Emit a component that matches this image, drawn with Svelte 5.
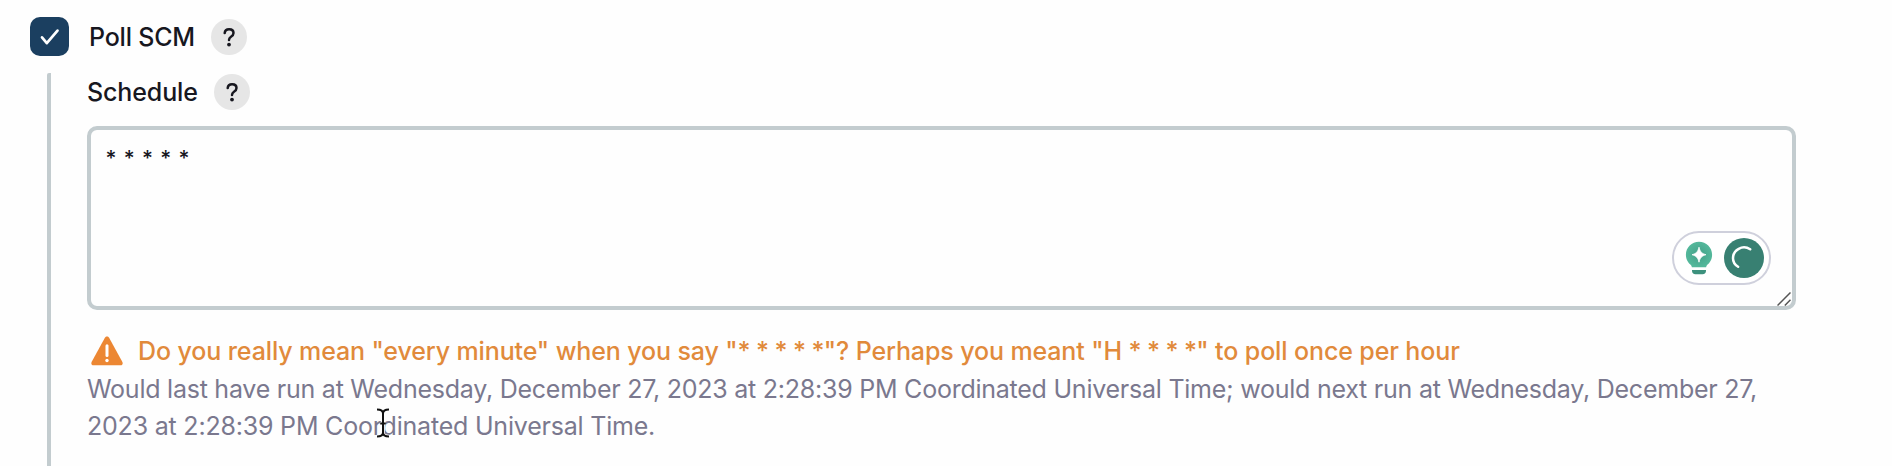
<script>
  let enabled = $state(true);
  let schedule = $state('* * * * *');
</script>

{#snippet help()}
  <button class="help" aria-label="Help">
    <svg viewBox="0 0 36 36" width="36" height="36" fill="none">
      <path d="M13.700 14.100c.2-2.500 1.900-3.900 4.400-3.900 2.600 0 4.400 1.500 4.400 3.800 0 1.800-1 2.800-2.500 3.700-1.400.9-2 1.600-2 3.200" stroke="#17171f" stroke-width="2.500" stroke-linecap="round" stroke-linejoin="round" />
      <circle cx="18" cy="25.600" r="1.900" fill="#17171f" />
    </svg>
  </button>
{/snippet}

<main>
  <div class="toggle">
    <label>
      <input type="checkbox" bind:checked={enabled} />
      <span class="box">
        {#if enabled}
          <svg viewBox="0 0 40 40" width="40" height="40" fill="none">
            <path d="M12 20.400l4.800 5.700L27.500 13.600" stroke="#fff" stroke-width="2.700" stroke-linecap="round" stroke-linejoin="round" />
          </svg>
        {/if}
      </span>
      <span class="name poll">Poll SCM</span>
    </label>
    {@render help()}
  </div>

  <section>
    <div class="heading">
      <span class="name sched">Schedule</span>
      {@render help()}
    </div>

    <div class="field">
      <textarea bind:value={schedule} spellcheck="false" aria-label="Schedule"></textarea>
      <div class="assistant">
        <svg class="bulb" viewBox="0 0 28 34" width="28" height="34">
          <defs>
            <radialGradient id="glow"><stop offset="0" stop-color="#43a088" /><stop offset="1" stop-color="#54b89b" /></radialGradient>
          </defs>
          <path d="M14 .8C6.700.8.9 6.500.9 13.700c0 5 2.500 8.300 5.200 10.500.4.8.6 1.300.8 2.100h14.200c.2-.8.4-1.300.8-2.100 2.700-2.200 5.200-5.500 5.200-10.500C27.100 6.500 21.300.8 14 .8z" fill="url(#glow)" />
          <path d="M14 6.200c1.100 4.600 2.600 6.200 7 7.500-4.400 1.300-5.900 2.900-7 7.500-1.100-4.600-2.600-6.200-7-7.500 4.400-1.300 5.900-2.900 7-7.500z" fill="#fff" stroke="#fff" stroke-width=".8" stroke-linejoin="round" />
          <path d="M7 29h14v.8c0 2.200-1.300 3.500-3.400 3.500h-7.200C8.300 33.300 7 32 7 29.800z" fill="#3d917d" />
        </svg>
        <svg viewBox="0 0 40 40" width="40" height="40" fill="none">
          <circle cx="20" cy="20" r="20" fill="#388072" />
          <path d="M26.200 11.300C18.500 6.300 9 12 9 20.300c0 3.600 1.900 6.600 5.100 8.500" stroke="#fff" stroke-width="2.500" stroke-linecap="round" />
        </svg>
      </div>
      <svg class="grip" viewBox="0 0 14 14" width="14" height="14" stroke="#555" stroke-width="1.500">
        <path d="M.5 13.500l13-13M7.800 13.500l5.700-5.700" />
      </svg>
    </div>

    <div class="warning">
      <svg viewBox="0 0 32 30" width="32" height="30">
        <path d="M13.900 1.700c.9-1.600 3.300-1.600 4.200 0l13.300 24.200c.8 1.600 0 3.300-1.800 3.300H2.400C.6 29.200-.2 27.500.6 25.900z" fill="#ec8733" />
        <path d="M16 9.700v9.800" stroke="#fff" stroke-width="3" stroke-linecap="round" />
        <circle cx="16" cy="24.500" r="1.700" fill="#fff" />
      </svg>
      <span>Do you really mean "every minute" when you say "<span class="cron">* * * * *</span>"? Perhaps you meant "H <span class="cron">* * * *</span>" to poll once per hour</span>
    </div>
    <p>
      <span class="first">Would last have run at Wednesday, December 27, 2023 at 2:28:39 PM Coordinated Universal Time; would next run at Wednesday, December 27,</span>
      <span class="second">2023 at 2:28:39 PM Coordinated Universal Time.</span>
    </p>
  </section>

  <svg class="caret" viewBox="0 0 14 30" width="14" height="30" fill="none">
    <path d="M1 1.500c3.500 0 6 .6 6 4v19c0 3.400-2.500 4-6 4M13 1.500c-3.500 0-6 .6-6 4M7 24.500c0 3.400 2.500 4 6 4M4.200 15.500h5.600" stroke="#fff" stroke-width="3.600" />
    <path d="M1 1.500c3.500 0 6 .6 6 4v19c0 3.400-2.500 4-6 4M13 1.500c-3.500 0-6 .6-6 4M7 24.500c0 3.400 2.500 4 6 4M4.200 15.500h5.600" stroke="#111" stroke-width="2" />
  </svg>
</main>

<style>
  :global(body) { background: #fefefe; }
  main {
    position: relative;
    box-sizing: border-box;
    height: 466px;
    padding: 16px 0 0 29.600px;
    overflow: hidden;
    font-family: Inter, "Liberation Sans", sans-serif;
    font-size: 25px;
    color: #17171f;
  }
  svg { display: block; flex: none; }
  .toggle, .toggle label, .heading { display: flex; align-items: center; }
  .toggle { height: 41px; }
  input { position: absolute; opacity: 0; margin: 0; }
  .box { width: 39.500px; height: 39.500px; border-radius: 10px; background: #1b3f60; }
  .name { font-weight: 450; white-space: nowrap; line-height: 36px; letter-spacing: -.2px; }
  .poll { width: 122px; margin-left: 19.900px; }
  .sched { width: 127px; letter-spacing: -.12px; }
  .help { padding: 0; border: 0; border-radius: 50%; background: #e6e6e6; width: 36px; height: 36px; }
  section {
    box-sizing: border-box;
    height: 400px;
    margin: 16px 0 0 17.800px;
    padding-left: 35.600px;
    border-left: 4px solid #c3cccf;
    border-top-left-radius: 2px;
  }
  .heading { height: 38px; }
  .field { position: relative; width: 1709px; height: 184.500px; margin: 14.500px 0 0 0; }
  textarea {
    display: block;
    box-sizing: border-box;
    width: 100%;
    height: 100%;
    resize: none;
    outline: none;
    border: 4px solid #c3cccf;
    border-radius: 10px;
    background: #fefefe;
    padding: 15px 14.500px;
    font: 500 21px/28px Inter, "Liberation Sans", sans-serif;
    letter-spacing: .85px;
    color: #17171f;
  }
  .assistant {
    position: absolute;
    right: 25px;
    bottom: 25px;
    display: flex;
    align-items: center;
    justify-content: space-between;
    box-sizing: border-box;
    width: 99px;
    height: 54px;
    padding: 0 5px 0 11px;
    border: 2px solid #cfd0dc;
    border-radius: 27px;
    background: #fff;
  }
  .grip { position: absolute; right: 5px; bottom: 4px; }
  .warning {
    display: flex;
    gap: 15.500px;
    height: 38px;
    margin: 22px 0 0 3.600px;
    color: #e18a3b;
    font-weight: 500;
    line-height: 38px;
    letter-spacing: -.12px;
    white-space: nowrap;
  }
  .warning svg { margin-top: 4px; }
  .cron { letter-spacing: -.6px; }
  p { margin: 0; padding-top: .5px; color: #7a788e; line-height: 37.600px; letter-spacing: -.24px; white-space: nowrap; }
  p span { display: block; }
  .second { letter-spacing: -.2px; }
  .caret { position: absolute; left: 376px; top: 408px; }
</style>
